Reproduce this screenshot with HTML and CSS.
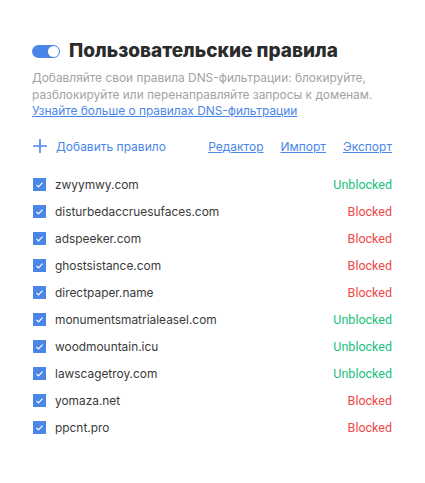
FILE: index.html
```html
<!DOCTYPE html>
<html lang="ru">
<head>
    <meta charset="UTF-8">
    <meta name="viewport" content="width=device-width, initial-scale=1.0">
    <title>Пользовательские правила</title>
    <link rel="stylesheet" href="styles.css">
</head>
<body>
    <div id="container">
        <div class="header">
            <span class="toggle"><span class="knob"></span></span>
            <h1>Пользовательские правила</h1>
        </div>
        <p class="desc">Добавляйте свои правила DNS-фильтрации: блокируйте, разблокируйте или перенаправляйте запросы к доменам.</p>
        <a class="more" href="#">Узнайте больше о правилах DNS-фильтрации</a>

        <div class="actions">
            <a class="add" href="#">
                <svg width="14" height="14" viewBox="0 0 14 14"><path d="M7 0v14M0 7h14" stroke="#4a86e8" stroke-width="1.6" fill="none"/></svg>
                Добавить правило
            </a>
            <div class="links">
                <a href="#">Редактор</a>
                <a href="#">Импорт</a>
                <a href="#">Экспорт</a>
            </div>
        </div>

        <ul class="rules">
            <li><span class="check"></span><span class="domain">zwyymwy.com</span><span class="status ok">Unblocked</span></li>
            <li><span class="check"></span><span class="domain">disturbedaccruesufaces.com</span><span class="status bad">Blocked</span></li>
            <li><span class="check"></span><span class="domain">adspeeker.com</span><span class="status bad">Blocked</span></li>
            <li><span class="check"></span><span class="domain">ghostsistance.com</span><span class="status bad">Blocked</span></li>
            <li><span class="check"></span><span class="domain">directpaper.name</span><span class="status bad">Blocked</span></li>
            <li><span class="check"></span><span class="domain">monumentsmatrialeasel.com</span><span class="status ok">Unblocked</span></li>
            <li><span class="check"></span><span class="domain">woodmountain.icu</span><span class="status ok">Unblocked</span></li>
            <li><span class="check"></span><span class="domain">lawscagetroy.com</span><span class="status ok">Unblocked</span></li>
            <li><span class="check"></span><span class="domain">yomaza.net</span><span class="status bad">Blocked</span></li>
            <li><span class="check"></span><span class="domain">ppcnt.pro</span><span class="status bad">Blocked</span></li>
        </ul>
    </div>
</body>
</html>
```

FILE: styles.css
```css
body {
    font-family: Inter, "Noto Sans", sans-serif;
    margin: 0;
    background: #fff;
    color: #333;
}

#container {
    padding: 38px 33px 0 32px;
}

.header {
    display: flex;
    align-items: center;
    gap: 9px;
}

.toggle {
    width: 28px;
    height: 13px;
    border-radius: 7px;
    background: #4a86e8;
    display: flex;
    justify-content: flex-end;
    align-items: center;
    padding: 0 1px;
    box-sizing: border-box;
}

.knob {
    width: 11px;
    height: 11px;
    border-radius: 50%;
    background: #fff;
}

h1 {
    margin: 0;
    font-size: 19px;
    font-weight: 800;
    line-height: 26px;
    color: #2b2b2b;
}

.desc {
    margin: 6px 0 0;
    font-size: 11.9px;
    line-height: 16.5px;
    color: #a3a3a3;
}

.more {
    display: block;
    font-size: 11.9px;
    line-height: 16.5px;
    color: #4a86e8;
}

.actions {
    display: flex;
    justify-content: space-between;
    align-items: center;
    margin-top: 19px;
    font-size: 12px;
}

.actions a {
    color: #4a86e8;
}

.add {
    display: flex;
    align-items: center;
    gap: 9px;
    text-decoration: none;
    padding-left: 1px;
}

.links {
    display: flex;
    gap: 17px;
}

.rules {
    list-style: none;
    margin: 17px 0 0;
    padding: 0;
}

.rules li {
    display: flex;
    align-items: center;
    height: 27px;
    font-size: 11.9px;
}

.check {
    width: 13px;
    height: 13px;
    background: #4a86e8 url("data:image/svg+xml,%3Csvg xmlns='http://www.w3.org/2000/svg' width='13' height='13'%3E%3Cpath d='M3.5 6.8l2 2 4-4.2' stroke='white' stroke-width='1.2' fill='none'/%3E%3C/svg%3E") no-repeat;
    margin-left: 1px;
    margin-right: 9px;
}

.domain {
    flex: 1;
    color: #3a3a3a;
}

.status {
    font-family: Roboto, "Noto Sans", sans-serif;
    font-size: 12.5px;
}

.status.ok {
    color: #20bf7e;
}

.status.bad {
    color: #f04848;
}
```
